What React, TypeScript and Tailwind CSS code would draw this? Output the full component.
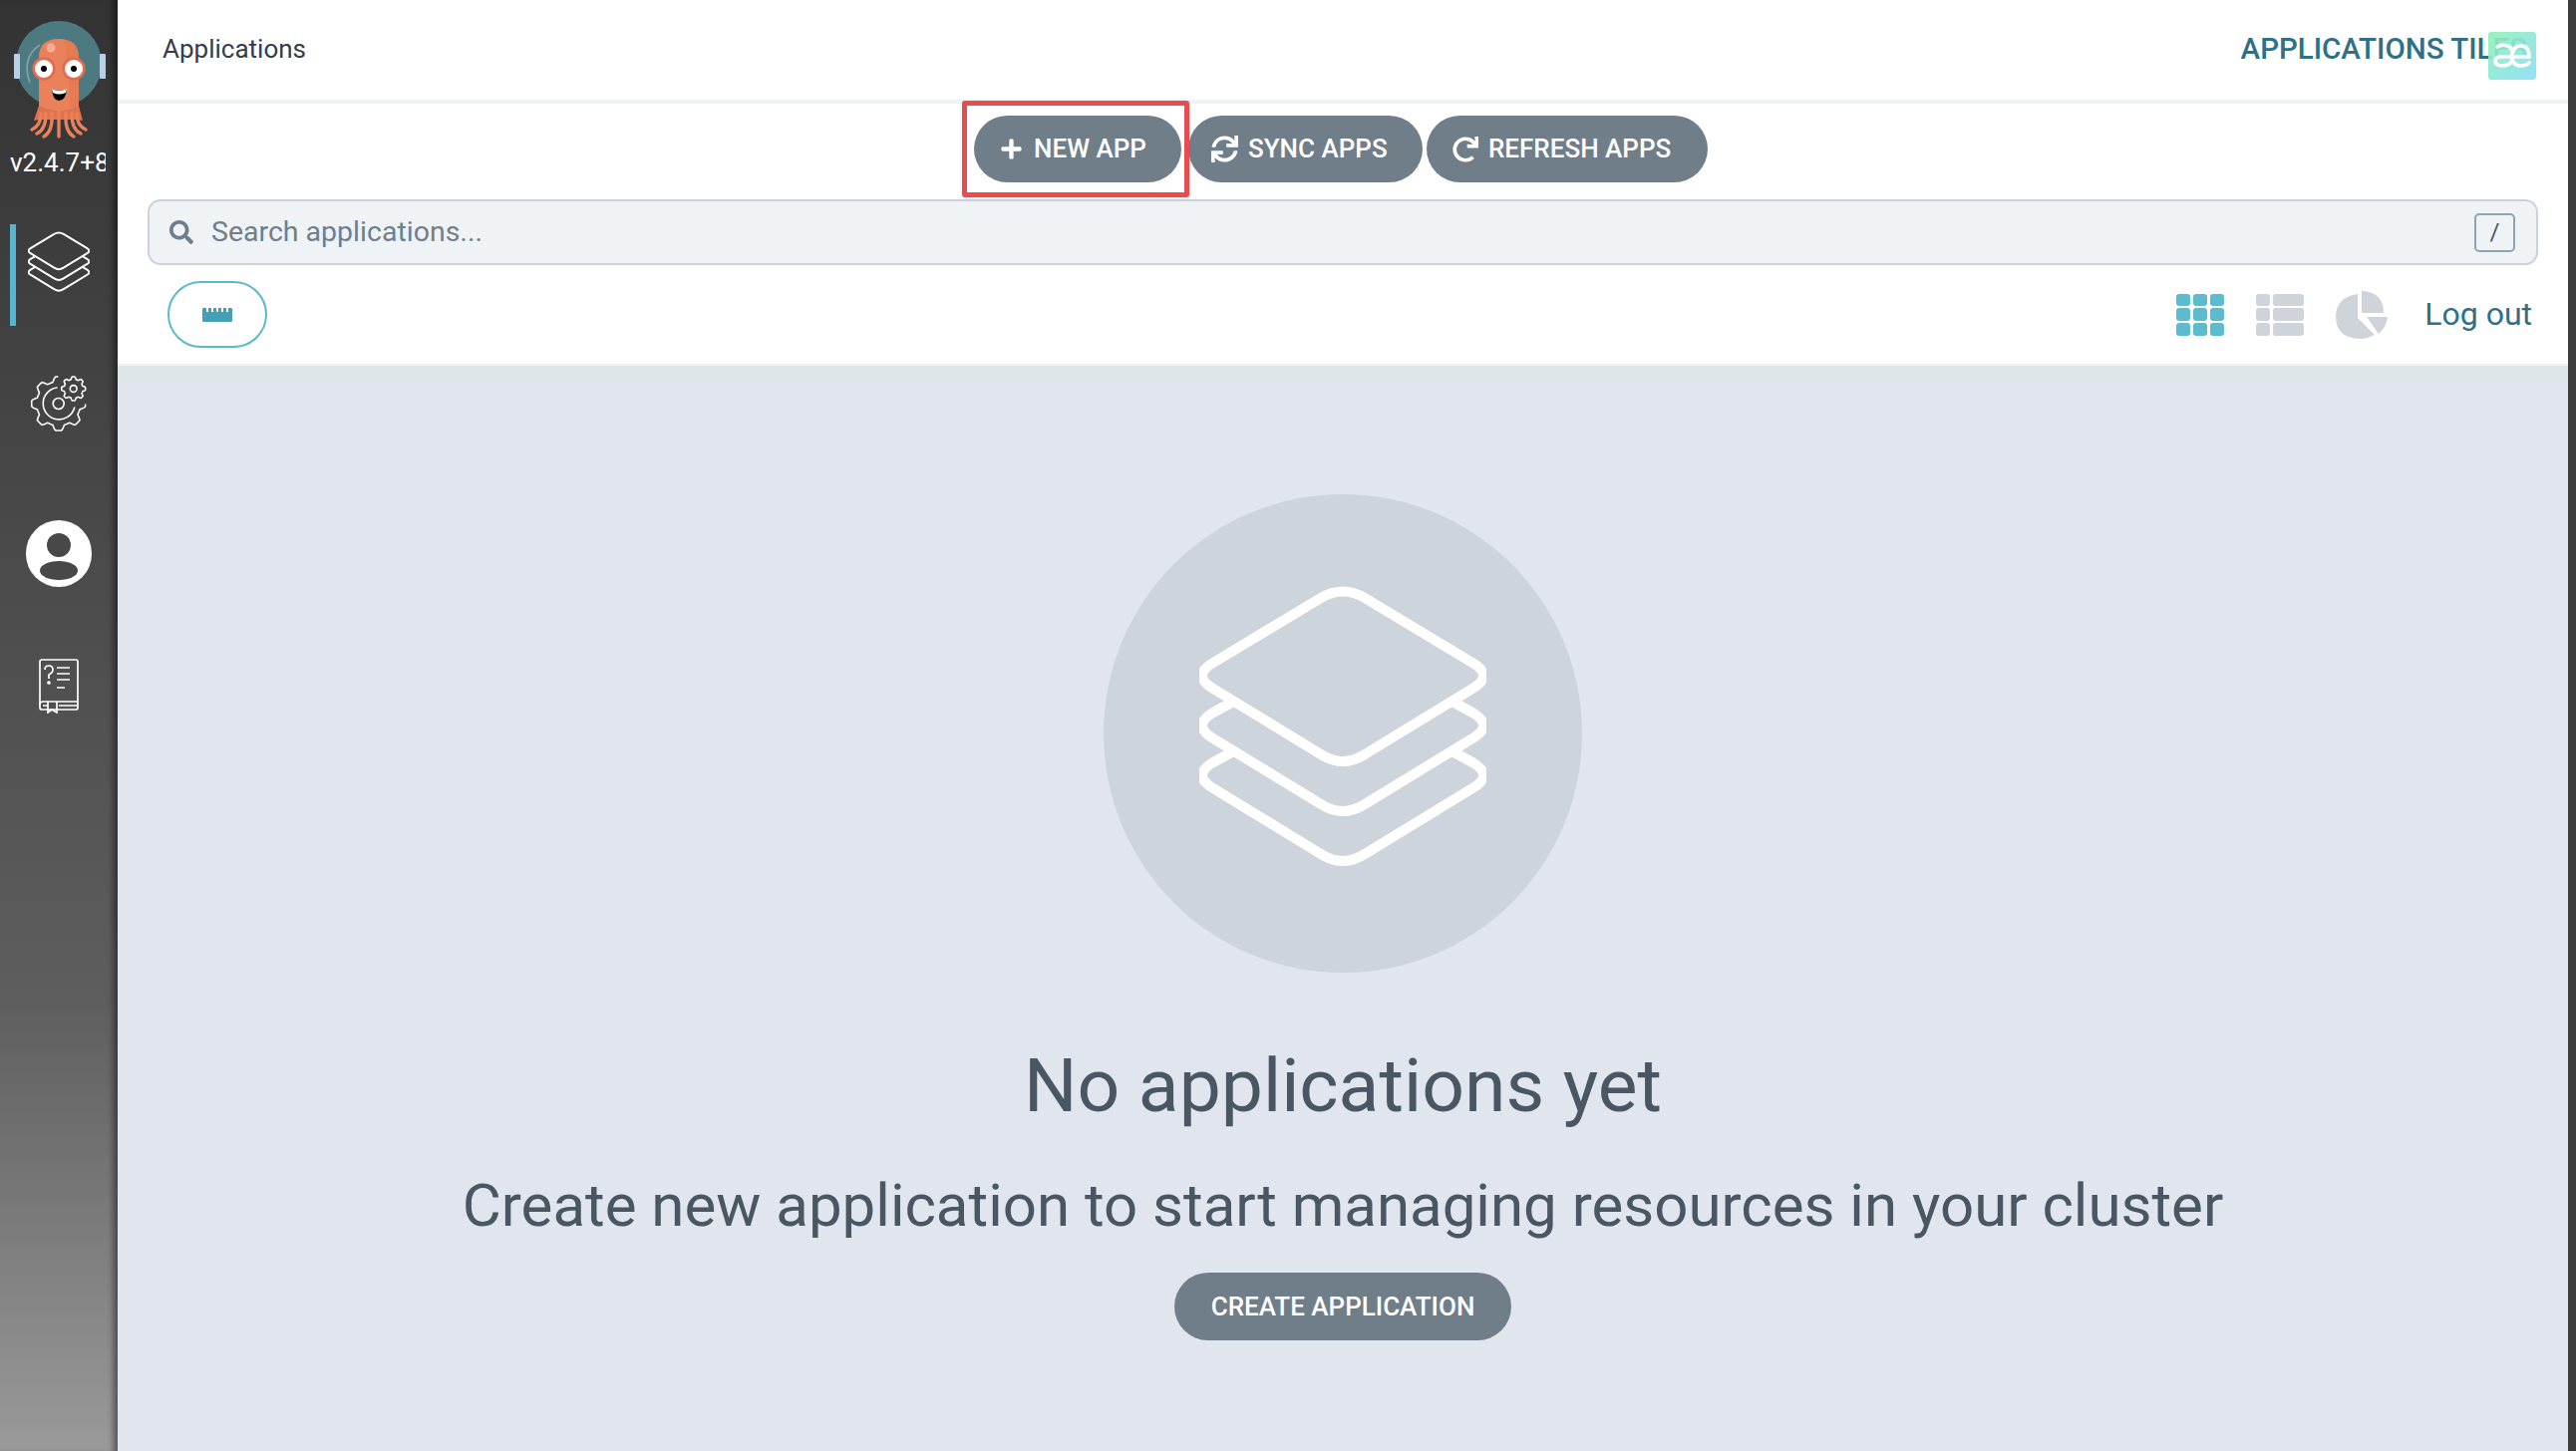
import React from "react";
import { FaPlus, FaRedo, FaSearch, FaSync } from "react-icons/fa";

function Stack({ className, strokeWidth }: { className: string; strokeWidth: number }) {
  return (
    <svg viewBox="0 0 288 281" className={className} fill="none" stroke="white" strokeWidth={strokeWidth} strokeLinejoin="round">
      <path d="M122 12 Q144 -1 166 12 L274 77 Q296 90 274 103 L166 169 Q144 183 122 169 L14 103 Q-8 90 14 77 Z" />
      <path d="M36 115 L14 127 Q-8 140 14 153 L122 219 Q144 233 166 219 L274 153 Q296 140 274 127 L252 115" />
      <path d="M36 165 L14 177 Q-8 190 14 203 L122 269 Q144 283 166 269 L274 203 Q296 190 274 177 L252 165" />
    </svg>
  );
}

function Logo() {
  return (
    <svg viewBox="0 0 93 120" className="w-[93px] h-[120px]">
      <circle cx="46" cy="44" r="43" fill="#4d7a80" />
      <rect x="1" y="34" width="6" height="25" rx="1" fill="#b9cfe6" />
      <rect x="87" y="34" width="6" height="25" rx="1" fill="#b9cfe6" />
      <path d="M27 25 Q8 38 17 63" stroke="#7ba3a6" strokeWidth="1.8" fill="none" />
      <path d="M26 38 Q26 19 46 19 Q66 19 66 38 L66 92 L26 92 Z" fill="#e9825a" />
      <path d="M52 20 Q66 22 66 38 L66 86 L58 88 Z" fill="#e4754f" opacity="0.6" />
      <path d="M26 86 Q46 96 66 86 L70 101 L63 100 L26 100 L21 101 Z" fill="#e0724f" />
      <g fill="none" stroke="#e9825a" strokeWidth="3.4" strokeLinecap="round">
        <path d="M46 92 L46 117" />
        <path d="M39 94 Q40 112 31 117" />
        <path d="M53 94 Q52 112 61 117" />
        <path d="M33 94 Q33 110 24 114" />
        <path d="M59 94 Q59 110 68 114" />
        <path d="M28 94 Q28 106 19 110" />
        <path d="M64 94 Q64 106 73 110" />
      </g>
      <circle cx="31" cy="49" r="11.7" fill="#e56b4f" />
      <circle cx="61" cy="49" r="11.7" fill="#e56b4f" />
      <circle cx="31" cy="49" r="9" fill="white" />
      <circle cx="61" cy="49" r="9" fill="white" />
      <circle cx="31" cy="49" r="3" fill="black" />
      <circle cx="61" cy="49" r="3" fill="black" />
      <path d="M39 69 Q46 73 54 69 Q53 81 46 81 Q40 81 39 69 Z" fill="black" />
      <path d="M39 69 Q46 73 54 69 L53 73 Q46 76 40 73 Z" fill="white" />
      <circle cx="38" cy="28" r="4.5" fill="#f3ae94" />
    </svg>
  );
}

// toothed outline, sampled around the circle between two angles
function gearPath(cx: number, cy: number, rOut: number, rIn: number, teeth: number, from: number, to: number) {
  const pts: string[] = [];
  for (let a = from; a <= to; a += 2) {
    const t = (a * Math.PI) / 180;
    const wave = Math.max(-1, Math.min(1, Math.cos(teeth * t) * 1.8));
    const r = rIn + (rOut - rIn) * (0.5 + 0.5 * wave);
    pts.push(`${(cx + r * Math.cos(t)).toFixed(2)} ${(cy + r * Math.sin(t)).toFixed(2)}`);
  }
  return "M" + pts.join(" L");
}

function Gear() {
  return (
    <svg viewBox="0 0 56 58" className="w-[56px] h-[58px]" fill="none" stroke="white" strokeWidth="1.6" strokeLinecap="round">
      <path d={gearPath(27.7, 29, 27, 22, 8, 2, 268)} />
      <path d="M43.7 33 A16 16 0 1 1 26 13" />
      <circle cx="27.7" cy="29" r="5.5" />
      <path d={gearPath(42.7, 14, 12, 9.5, 8, 0, 360)} />
      <circle cx="42.7" cy="14" r="3.4" />
    </svg>
  );
}

function Book() {
  return (
    <svg viewBox="0 0 40 55" className="w-[40px] h-[55px]" fill="none" stroke="white" strokeWidth="1.7">
      <path d="M3 1 H37 Q39 1 39 3 V49 Q39 51 37 51 H3 Q1 51 1 49 V3 Q1 1 3 1 Z" />
      <path d="M1 46 Q1 43 4 43 H39 M39 47 H20 M9 47 H4" />
      <path d="M9 43 V54 L13 51 L18 54 V43" />
      <path d="M18 9 H31 M18 15 H31 M18 21 H31 M18 29 H26" />
      <path d="M6 11 Q6 7 10 7 Q14 7 14 11 Q14 14 10 16 V20" />
      <circle cx="10" cy="24" r="1" fill="white" />
    </svg>
  );
}

function Ae() {
  return (
    <svg viewBox="0 0 48 48" className="w-[48px] h-[48px]" fill="none" stroke="white" strokeWidth="3.6" strokeLinecap="round">
      <path d="M9 15 Q14 12 19 14 Q24 15 24 21 V29 M24 25 H13 Q7 25 7 29 Q7 34 14 34 Q21 34 24 29" />
      <path d="M24 25 H41 Q41 14 33 14 Q24 14 24 25 Q24 34 33 34 Q38 34 41 31" />
    </svg>
  );
}

function Grid({ active }: { active: boolean }) {
  const cells = [0, 1, 2];
  const fill = active ? "bg-[#5dbbd0]" : "bg-[#ced4da]";
  return (
    <div className="w-[48px] h-[42px] grid grid-rows-3 gap-[2px]">
      {cells.map((r) =>
        active ? (
          <div key={r} className="grid grid-cols-3 gap-[3px]">
            {cells.map((c) => (
              <div key={c} className={`${fill} rounded-[3px]`} />
            ))}
          </div>
        ) : (
          <div key={r} className="flex gap-[3px]">
            <div className={`${fill} w-[14px] rounded-[3px]`} />
            <div className={`${fill} flex-1 rounded-[3px]`} />
          </div>
        )
      )}
    </div>
  );
}

function Btn({ icon, label, w, pl, gap }: { icon: React.ReactNode; label: string; w: string; pl: string; gap: string }) {
  return (
    <button className={`${w} ${pl} ${gap} h-[67px] shrink-0 rounded-[34px] bg-[#707e89] text-white flex items-center text-[26px] font-medium whitespace-nowrap`}>
      {icon}
      {label}
    </button>
  );
}

export default function App() {
  return (
    <div className="flex h-[1456px] w-[2584px] overflow-hidden font-['Roboto',sans-serif] bg-white">
      <aside className="w-[118px] shrink-0 flex flex-col items-center pt-[20px] bg-gradient-to-b from-[#333333] via-[#5e5e5e] via-[69%] to-[#9a9a9a] shadow-[inset_-8px_0_6px_-4px_rgba(0,0,0,0.45)]">
        <Logo />
        <div className="mt-[6px] w-[96px] overflow-hidden whitespace-nowrap text-[26px] leading-[34px] text-white -translate-x-[1px]">v2.4.7+8c1b2f</div>
        <div className="relative mt-[45px] w-full h-[102px] flex justify-center pt-[7px]">
          <div className="absolute left-[10px] top-0 bottom-0 w-[6px] bg-[#55b6cd]" />
          <Stack className="w-[62px] h-[61px]" strokeWidth={9} />
        </div>
        <div className="mt-[49px]"><Gear /></div>
        <div className="mt-[88px] w-[66px] h-[67px] rounded-full bg-white overflow-hidden flex flex-col items-center">
          <div className="mt-[13px] w-[24px] h-[24px] rounded-full bg-[#484848]" />
          <div className="mt-[4px] w-[38px] h-[19px] rounded-[50%] bg-[#484848]" />
        </div>
        <div className="mt-[72px]"><Book /></div>
      </aside>

      <main className="flex-1 min-w-0 flex flex-col">
        <header className="relative h-[104px] shrink-0 flex items-center justify-between border-b-4 border-[#eff3f5] pl-[45px] pr-[41px]">
          <span className="text-[26px] text-[#363c4a] -mt-[1px]">Applications</span>
          <span className="text-[29.5px] font-medium text-[#2e7087] whitespace-nowrap -mt-[2px]">APPLICATIONS TILES</span>
          <div className="absolute right-[32px] top-[32px] w-[48px] h-[48px] rounded-[3px] bg-gradient-to-br from-[#90f0b0]/90 to-[#8fdff8]/95"><Ae /></div>
        </header>

        <div className="h-[96px] shrink-0 flex items-center justify-center">
          <div className="flex items-center -ml-[16px] -mt-[5px]">
            <div className="relative z-10 h-[97px] w-[228px] shrink-0 border-[5px] border-[#ea4b4f] rounded-[3px] pl-[7px] flex items-center shadow-sm -mr-[1px]">
              <Btn icon={<FaPlus className="w-[23px] h-[23px]" />} label="NEW APP" w="w-[208px]" pl="pl-[26px]" gap="gap-[11px]" />
            </div>
            <Btn icon={<FaSync className="w-[27px] h-[27px]" />} label="SYNC APPS" w="w-[235px]" pl="pl-[23px]" gap="gap-[10px]" />
            <div className="ml-[4px]">
              <Btn icon={<FaRedo className="w-[26px] h-[26px]" />} label="REFRESH APPS" w="w-[282px]" pl="pl-[26px]" gap="gap-[10px]" />
            </div>
          </div>
        </div>

        <div className="shrink-0 px-[30px]">
          <div className="h-[66px] rounded-[13px] border-[2px] border-[#ccd2d9] bg-[#eff3f6] flex items-center pl-[20px] pr-[21px]">
            <FaSearch className="w-[24px] h-[24px] text-[#6f7e8a]" />
            <span className="ml-[18px] text-[28.5px] text-[#6f7e8a]">Search applications...</span>
            <div className="ml-auto w-[41px] h-[39px] rounded-[5px] border-[2px] border-[#8fa4b1] flex items-center justify-center text-[24px] text-[#495763]">/</div>
          </div>
        </div>

        <div className="h-[101px] shrink-0 flex items-center pl-[50px] pr-[36px] border-b-2 border-[#eff3f5]">
          <div className="w-[100px] h-[67px] rounded-[34px] border-[2px] border-[#5cb8cd] flex items-center justify-center">
            <svg viewBox="0 0 30 14" className="w-[30px] h-[14px]">
              <path d="M1 0 H4 V4 H6 V0 H9 V4 H11 V0 H14 V4 H16 V0 H19 V4 H21 V0 H24 V4 H26 V0 H29 Q30 0 30 1 V13 Q30 14 29 14 H1 Q0 14 0 13 V1 Q0 0 1 0 Z" fill="#479fb5" />
            </svg>
          </div>
          <div className="ml-auto flex items-center">
            <Grid active />
            <div className="ml-[32px]"><Grid active={false} /></div>
            <svg viewBox="0 0 52 48" className="ml-[32px] w-[52px] h-[48px]" fill="#ced4da">
              <path d="M22 3 V27 L39 44 Q31 48 24 48 Q0 47 0 25 Q1 6 22 3 Z" />
              <path d="M26 0 Q48 1 48 22 H26 Z" />
              <path d="M31 26 H52 Q51 36 43 43 Z" />
            </svg>
            <span className="ml-[37px] text-[32px] leading-none text-[#2e7087] -mt-[2px]">Log out</span>
          </div>
        </div>

        <section className="flex-1 flex flex-col items-center bg-[#e1e5ee] pt-[129px] shadow-[inset_0_16px_0_0_#dee6e9]">
          <div className="w-[480px] h-[480px] rounded-full bg-[#ced4db] flex items-center justify-center">
            <Stack className="w-[288px] h-[281px] mb-[15px]" strokeWidth={10} />
          </div>
          <h1 className="mt-[68px] text-[75px] leading-[90px] font-normal text-[#495763]">No applications yet</h1>
          <p className="mt-[41px] text-[60px] leading-[70px] text-[#495763]">Create new application to start managing resources in your cluster</p>
          <button className="mt-[32px] h-[68px] w-[338px] rounded-[34px] bg-[#707e89] text-white text-[26px] font-medium">CREATE APPLICATION</button>
        </section>
      </main>
      <div className="w-[8px] shrink-0 bg-[#3c3c3c]" />
    </div>
  );
}
